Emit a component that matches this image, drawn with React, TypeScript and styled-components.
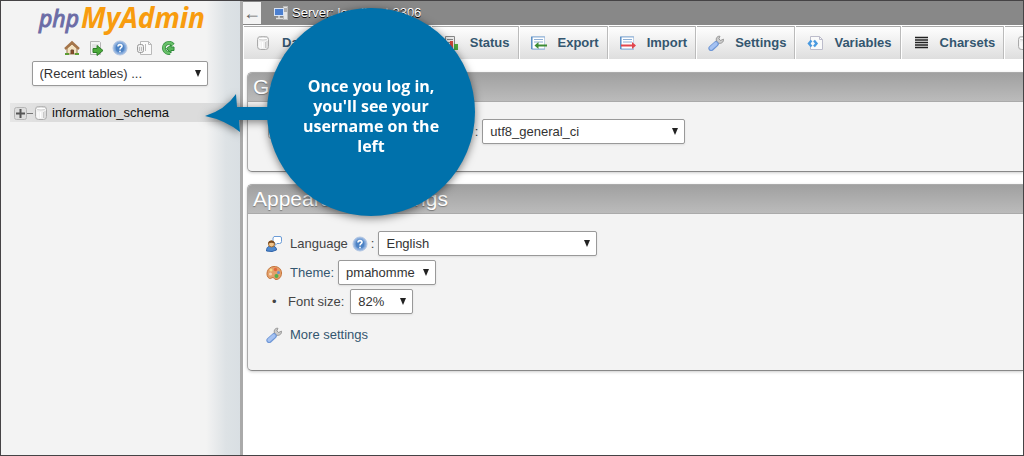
import React from "react";
import styled, { createGlobalStyle } from "styled-components";

const GlobalStyle = createGlobalStyle`
  *, *::before, *::after { box-sizing: border-box; }
  body {
    margin: 0;
    background: #fff;
    color: #444;
    font: 13px/20px "Liberation Sans", Arial, sans-serif;
  }
  a { color: #34566f; text-decoration: none; }
`;

const Page = styled.div`
  display: grid;
  grid-template-columns: 239px minmax(0, 1fr);
  position: relative;
  min-height: 100vh;
  border: 1px solid #454345;
  overflow: hidden;
`;

const Sidebar = styled.aside`
  display: flex;
  flex-direction: column;
  align-items: center;
  padding: 4px 2px 0 0;
  background: linear-gradient(to left, #d9dfe3 0, #dde2e5 14px, #f3f3f3 34px);
`;

const LogoLink = styled.a`
  display: block;
  height: 35px;
`;

const QuickLinks = styled.nav`
  display: flex;
  gap: 8px;
  margin-bottom: 3px;

  a { display: block; height: 18px; }
`;

const Icon = styled.svg`
  display: block;
  flex: none;
  width: 16px;
  height: 16px;
`;

const SelectBox = styled.span<{ $width: number }>`
  display: inline-grid;
  width: ${(p) => p.$width}px;
  align-items: center;

  & > * { grid-area: 1 / 1; }
`;

const SelectField = styled.select`
  appearance: none;
  width: 100%;
  height: 25px;
  margin: 0;
  padding: 0 20px 0 7px;
  border: 1px solid #999;
  border-radius: 2px;
  background: #fff;
  color: #333;
  font: inherit;
  box-shadow: 0 1px 2px #ddd;
`;

const Chevron = styled.svg`
  justify-self: end;
  width: 6px;
  height: 7px;
  margin-right: 7px;
  pointer-events: none;
`;

const Tree = styled.ul`
  align-self: stretch;
  list-style: none;
  margin: 17px -2px 0 9px;
  padding: 0;
`;

const TreeItem = styled.li`
  display: flex;
  align-items: center;
  height: 19px;
  padding-left: 4px;
  background: linear-gradient(to right, #e6e6e6, #dcdcdc 40px, #dcdcdc 190px, #d2d6d9);

  a { margin-left: 3px; color: #111; }
`;

const ExpandButton = styled.button`
  display: block;
  padding: 0;
  border: 0;
  background: none;
`;

const TreeMark = styled.svg`
  display: block;
  width: 19px;
  height: 16px;
`;

const Main = styled.main`
  border-left: 3px solid #aaa;
  background: #fff;
`;

const ServerBar = styled.header`
  display: flex;
  align-items: center;
  height: 24px;
  background: #888;
  color: #fff;
  text-shadow: 0 1px 0 #000;
`;

const BackButton = styled.button`
  width: 18px;
  height: 22px;
  margin-right: 12px;
  padding: 0;
  border: 0;
  background: #f3f3f3;
  color: #666;
  font: 18px/20px "Liberation Sans", sans-serif;
`;

const ServerName = styled.a`
  display: flex;
  align-items: center;
  gap: 3px;
  color: #fff;
`;

const Tabs = styled.nav`
  display: flex;
  height: 34px;
  overflow: hidden;
  border-top: 1px solid #fff;
  box-shadow: inset 0 1px 0 #aaa;
  background: linear-gradient(#fff, #dedede);
`;

const Tab = styled.a`
  display: flex;
  align-items: center;
  gap: 11px;
  flex: none;
  padding: 0 8px 0 12px;
  border-right: 1px solid #bbb;
  box-shadow: inset 1px 0 0 #fff;
  font-weight: bold;
`;

const Content = styled.div`
  display: flex;
  flex-direction: column;
  gap: 12px;
  padding: 13px 0 0 4px;
`;

const Group = styled.section`
  border: 1px solid #aaa;
  border-right: 0;
  border-color: #aaa #aaa #888;
  border-radius: 5px 0 0 5px;
  background: #f3f3f3;
  box-shadow: 0 1px 3px #ccc;
  overflow: hidden;
`;

const GroupTitle = styled.h2`
  margin: 0;
  padding: 0 5px;
  background: linear-gradient(#a0a0a0, #bbb);
  border-bottom: 1px solid #aaa;
  color: #fff;
  font-size: 21px;
  font-weight: normal;
  line-height: 28px;
  text-shadow: 0 1px 1px #777;
`;

const Settings = styled.ul<{ $bottom: number }>`
  display: flex;
  flex-direction: column;
  gap: 4px;
  list-style: none;
  margin: 0;
  padding: 17px 0 ${(p) => p.$bottom}px 18px;
`;

const Setting = styled.li<{ $gapAbove?: boolean }>`
  display: flex;
  align-items: center;
  height: 25px;
  margin-top: ${(p) => (p.$gapAbove ? 4 : 0)}px;
`;

const Label = styled.label<{ $wide?: boolean }>`
  margin: 0 ${(p) => (p.$wide ? 6 : 4)}px 0 8px;
`;

const Bullet = styled.span`
  width: 14px;
  padding-left: 6px;
`;

const Colon = styled.span`
  margin: 0 4px 0 3px;
`;

const Callout = styled.div`
  position: absolute;
  left: 204px;
  top: 7px;
  display: flex;
  align-items: center;
  filter: drop-shadow(0 2px 4px rgba(0, 0, 0, 0.5));
  pointer-events: none;
`;

const CalloutArrow = styled.svg`
  display: block;
  width: 66px;
  height: 44px;
  margin-right: -4px;
`;

const Bubble = styled.p`
  display: flex;
  align-items: center;
  width: 208px;
  height: 208px;
  margin: 0;
  padding: 8px 30px 0;
  border-radius: 50%;
  background: #0071ab;
  color: #fff;
  font: 700 16px/20px "Open Sans", sans-serif;
  text-align: center;
`;

type IconProps = { name: string };

const drawings: Record<string, React.ReactNode> = {
  home: (
    <>
      <path d="M3 8v6h10V8L8 4z" fill="#f3e2c2" stroke="#9a7b53" />
      <path d="M1 9l7-6.500L15 9" fill="none" stroke="#a5754a" strokeWidth="2.400" />
      <path d="M7 14v-4h2.500v4" fill="#8c4a22" stroke="#6d4b34" />
      <path d="M1 14h4M11 14h4" stroke="#5c9c31" strokeWidth="2" />
    </>
  ),
  exit: (
    <>
      <path d="M2.500 1.500h9l1 1v12h-10z" fill="#f4f4f4" stroke="#b5b5b5" />
      <path d="M4 5h7M4 7h4" stroke="#d2d2d2" />
      <path d="M5 8.500h4V5.500l6 5-6 5v-3H5z" fill="#4caa3a" stroke="#2d7d28" />
    </>
  ),
  help: (
    <>
      <circle cx="8" cy="8" r="7" fill="#8fb2e0" stroke="#b3c6e2" />
      <circle cx="8" cy="8" r="5" fill="#4c82c4" stroke="#7ba3d6" />
      <path d="M6 6.500C6 4 10 4 10 6.300 10 7.800 8 7.700 8 9.500M8 10.700v1.500" fill="none" stroke="#fff" strokeWidth="1.600" />
    </>
  ),
  docs: (
    <>
      <path d="M4.500 1.500h8l3 3v10h-11z" fill="#fafafa" stroke="#b9b9b9" />
      <path d="M12.500 1.500v3h3" fill="none" stroke="#b9b9b9" />
      <rect x="1.500" y="4.500" width="6" height="8" rx="2" fill="#eee" stroke="#999" />
      <path d="M3.500 7v4M5.500 7v4M9.500 4v7" stroke="#bbb" />
    </>
  ),
  reload: (
    <>
      <path d="M13 5A5 5 0 1 0 10 12.800" fill="none" stroke="#3d9447" strokeWidth="4" />
      <path d="M13 5A5 5 0 1 0 10 12.800" fill="none" stroke="#68c069" strokeWidth="2.200" />
      <path d="M6.500 8.500L11 5v2h3v3.500h-3v2.500z" fill="#5ab65b" stroke="#2f8a3b" />
    </>
  ),
  database: (
    <>
      <rect x="2.500" y="1.500" width="11" height="13" rx="3" fill="#f1f1f1" stroke="#aaa" />
      <ellipse cx="8" cy="3.500" rx="4.500" ry="1.500" fill="#fff" stroke="#ccc" />
      <path d="M5 7v6M7.500 7v6" stroke="#fff" />
      <path d="M10.500 7v6M12 6v7" stroke="#c9c9c9" />
    </>
  ),
  server: (
    <>
      <rect x="10.500" y="1.500" width="4" height="13" fill="#e5e5e5" stroke="#bbb" />
      <path d="M11 4h3M11 6h3" stroke="#777" />
      <rect x="1.500" y="3.500" width="9" height="7" fill="#4b7fd0" stroke="#d8e3f5" />
      <path d="M6 11v2M3 13.500h7" stroke="#ddd" strokeWidth="1.500" />
    </>
  ),
  sql: (
    <>
      <path d="M2.500 1.500h11v13h-11z" fill="#fff" stroke="#aaa" />
      <path d="M5 5h6M5 8h6M5 11h4" stroke="#6b93c9" />
    </>
  ),
  status: (
    <>
      <path d="M2.500 1.500h9v13h-9z" fill="#ececec" stroke="#888" />
      <path d="M4 4.500h6M4 7.500h6" stroke="#888" />
      <rect x="7" y="6" width="3" height="9" fill="#d84b3c" />
      <rect x="11" y="9" width="4" height="6" fill="#4ca93d" />
    </>
  ),
  export: (
    <>
      <path d="M.500 1.500h13v13h-13z" fill="#fff" stroke="#bccfe4" />
      <path d="M0 2h14M3 4.500h9M3 7h9M1 14h13" stroke="#8fb0d6" />
      <path d="M.800 2v12" stroke="#5b8fc6" strokeWidth="1.500" />
      <path d="M5 10.500h11" stroke="#3d8c34" strokeWidth="2" />
      <path d="M7.500 7L3.500 10.500l4 3.500z" fill="#3d8c34" />
    </>
  ),
  import: (
    <>
      <path d="M.500 1.500h13v13h-13z" fill="#fff" stroke="#bccfe4" />
      <path d="M0 2h14M3 4.500h9M3 7h9M1 14h13" stroke="#8fb0d6" />
      <path d="M.800 2v12" stroke="#5b8fc6" strokeWidth="1.500" />
      <path d="M1 10.500h12" stroke="#e3464c" strokeWidth="2" />
      <path d="M12 7l4 3.500-4 3.500z" fill="#e3464c" />
    </>
  ),
  wrench: (
    <>
      <path d="M8 8.500L12 4.500" stroke="#999" strokeWidth="4" />
      <path d="M8.500 6C7.500 3 9.500 .800 12 1.300L10.800 3.800 12.500 5.500 15.500 4.200C16 7 13 9.300 10 8z" fill="#ccc" stroke="#999" />
      <path d="M3.200 13.300l4.800-4.300" stroke="#6f97d6" strokeWidth="5.600" strokeLinecap="round" />
      <path d="M3.200 13l4.600-4.200" stroke="#a5c2f2" strokeWidth="3.600" strokeLinecap="round" />
    </>
  ),
  variables: (
    <>
      <path d="M3.500 1.500h9l3 3v10h-12z" fill="#fafafa" stroke="#bcbccb" />
      <path d="M12.500 1.500v3h3" fill="none" stroke="#bcbccb" />
      <path d="M4.500 5.500L2 8.500l2.500 3M7 5.500l2.500 3-2.500 3" fill="none" stroke="#4a9ae0" strokeWidth="2.400" />
    </>
  ),
  charsets: <path d="M2 2.500h13M2 5h13M2 7.500h13M2 10h13M2 12.500h13" stroke="#222" strokeWidth="1.300" />,
  language: (
    <>
      <path d="M8 .500h6a1.500 1.500 0 0 1 1.500 1.500v3.500a2 2 0 0 1-2 2h-2.500l-2 2v-2.500l-2-2V2z" fill="#fff" stroke="#6b9bd6" />
      <path d="M.500 15c0-4 2-5 5-5s5 1 5 4l-4.500 1.500z" fill="#4f8ad0" stroke="#2e62a8" />
      <circle cx="5.500" cy="8" r="3" fill="#f2c58c" stroke="#a06a2e" />
      <path d="M2 8C2 3.500 8.500 3.500 8.500 7.500 6.500 6.500 4 6.500 2 8z" fill="#7b4a1e" />
    </>
  ),
  palette: (
    <>
      <path d="M8 1.500c4.500 0 7.500 2.500 7.500 6.500S13 14.500 10 14.500c-2 0-1.500-2-3-2s-2 1.500-3.500 1C-1 11.500 .500 1.500 8 1.500z" fill="#e3a06a" stroke="#c4743c" />
      <circle cx="5" cy="5" r="1.500" fill="#f3d98a" />
      <circle cx="9.500" cy="4.500" r="1.700" fill="#e5683c" />
      <circle cx="12.500" cy="7.500" r="1.500" fill="#6a93cc" />
      <circle cx="10.500" cy="11" r="2" fill="#54ae4b" />
      <circle cx="4.500" cy="9" r="1.500" fill="#f5d5b4" />
    </>
  ),
};

const Glyph = ({ name }: IconProps) => (
  <Icon viewBox="0 0 16 16" fill="none" aria-hidden="true">
    {drawings[name]}
  </Icon>
);

type SelectProps = { id: string; width: number; value: string; label?: string };

const Select = ({ id, width, value, label }: SelectProps) => (
  <SelectBox $width={width}>
    <SelectField id={id} aria-label={label}>
      <option>{value}</option>
    </SelectField>
    <Chevron viewBox="0 0 6 7" aria-hidden="true">
      <path d="M0 0h6L3 7z" fill="#222" />
    </Chevron>
  </SelectBox>
);

const quickLinks = [
  ["home", "Home"],
  ["exit", "Log out"],
  ["help", "phpMyAdmin documentation"],
  ["docs", "Documentation"],
  ["reload", "Reload navigation panel"],
];

const tabs = [
  ["database", "Databases"],
  ["sql", "SQL"],
  ["status", "Status"],
  ["export", "Export"],
  ["import", "Import"],
  ["wrench", "Settings"],
  ["variables", "Variables"],
  ["charsets", "Charsets"],
  ["database", "Engines"],
];

export default function App() {
  return (
    <Page>
      <GlobalStyle />
      <Sidebar>
        <LogoLink href="#" aria-label="phpMyAdmin">
          <svg width="168" height="35" viewBox="0 0 168 35" overflow="visible" fontFamily="'Noto Sans', sans-serif" fontStyle="italic">
            <text x="3" y="22" fontSize="23" fontWeight="400" fill="#6c6ca6" stroke="#6c6ca6">php</text>
            <text x="45" y="23" fontSize="28" fontWeight="700" fill="#f89c0e">MyAdmin</text>
          </svg>
        </LogoLink>
        <QuickLinks>
          {quickLinks.map(([icon, label]) => (
            <a key={icon} href="#" aria-label={label}>
              <Glyph name={icon} />
            </a>
          ))}
        </QuickLinks>
        <Select id="recent" width={176} value="(Recent tables) ..." label="Recent tables" />
        <Tree>
          <TreeItem>
            <ExpandButton aria-label="Expand">
              <TreeMark viewBox="0 0 19 16" fill="none">
                <rect x=".5" y="2.500" width="12" height="12" rx="2" fill="#ddd" stroke="#b5b5b5" />
                <path d="M6.500 4v9M2 8.500h9" stroke="#555" strokeWidth="2" />
                <path d="M13 8.500h7" stroke="#777" />
              </TreeMark>
            </ExpandButton>
            <Glyph name="database" />
            <a href="#">information_schema</a>
          </TreeItem>
        </Tree>
      </Sidebar>
      <Main>
        <ServerBar>
          <BackButton aria-label="Hide panel">←</BackButton>
          <ServerName href="#">
            <Glyph name="server" />
            Server: localhost:3306
          </ServerName>
        </ServerBar>
        <Tabs>
          {tabs.map(([icon, label]) => (
            <Tab key={label} href="#">
              <Glyph name={icon} />
              {label}
            </Tab>
          ))}
        </Tabs>
        <Content>
          <Group>
            <GroupTitle>General Settings</GroupTitle>
            <Settings $bottom={27}>
              <Setting>
                <Glyph name="database" />
                <Label htmlFor="collation" $wide>Server connection collation:</Label>
                <Glyph name="help" />
                <Colon>:</Colon>
                <Select id="collation" width={203} value="utf8_general_ci" />
              </Setting>
            </Settings>
          </Group>
          <Group>
            <GroupTitle>Appearance Settings</GroupTitle>
            <Settings $bottom={23}>
              <Setting>
                <Glyph name="language" />
                <Label htmlFor="language">Language</Label>
                <Glyph name="help" />
                <Colon>:</Colon>
                <Select id="language" width={219} value="English" />
              </Setting>
              <Setting>
                <Glyph name="palette" />
                <Label htmlFor="theme">
                  <a href="#">Theme:</a>
                </Label>
                <Select id="theme" width={98} value="pmahomme" />
              </Setting>
              <Setting>
                <Bullet>•</Bullet>
                <Label htmlFor="size" $wide>Font size:</Label>
                <Select id="size" width={63} value="82%" />
              </Setting>
              <Setting $gapAbove>
                <Glyph name="wrench" />
                <Label as="span">
                  <a href="#">More settings</a>
                </Label>
              </Setting>
            </Settings>
          </Group>
        </Content>
      </Main>
      <Callout>
        <CalloutArrow viewBox="0 0 66 44" aria-hidden="true">
          <path d="M0 26Q20 20 31 4L32 17H66V30H34L35 42Q20 30 0 26z" fill="#0071ab" />
        </CalloutArrow>
        <Bubble>Once you log in, you'll see your username on the left</Bubble>
      </Callout>
    </Page>
  );
}
